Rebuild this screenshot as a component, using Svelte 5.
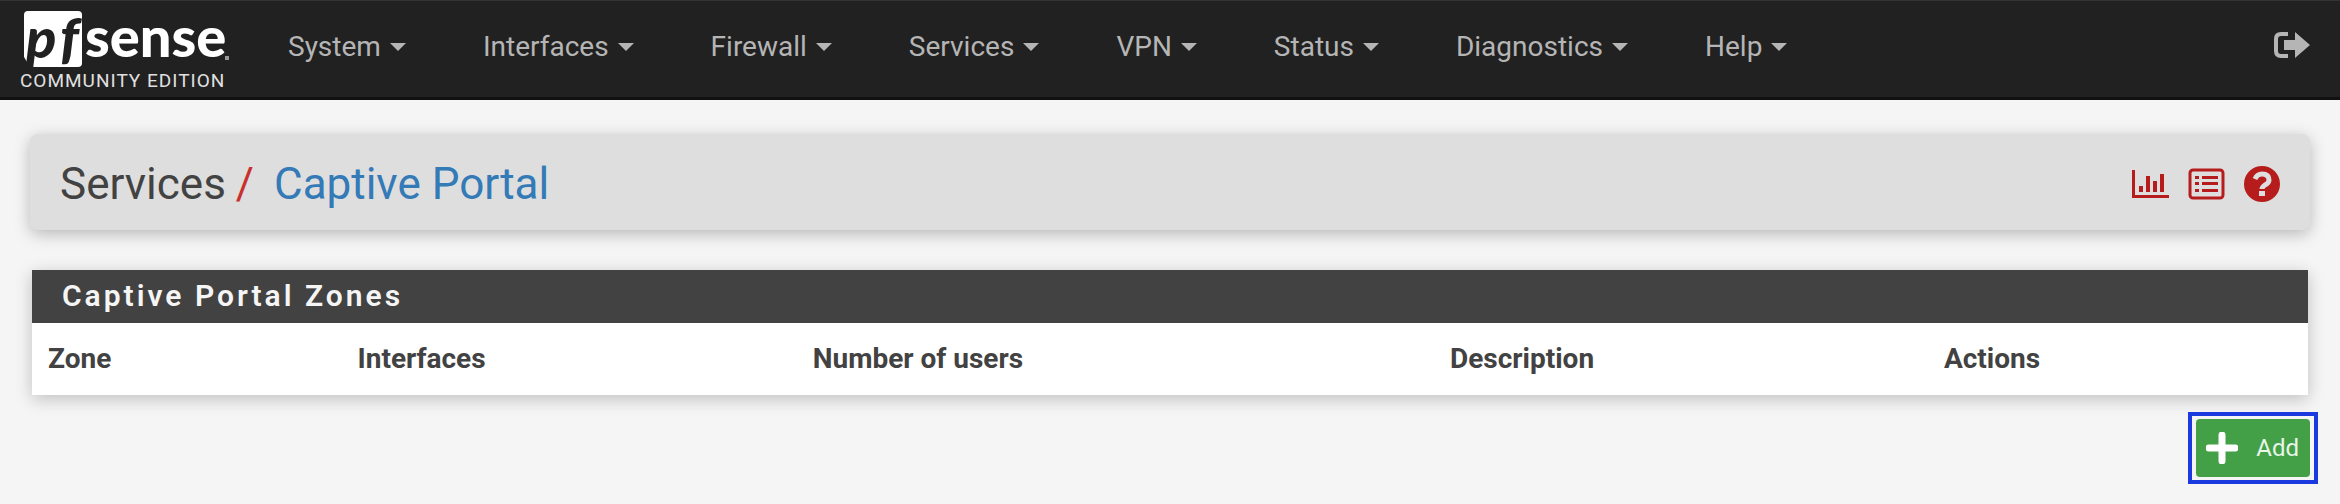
<script>
  const menus = ['System', 'Interfaces', 'Firewall', 'Services', 'VPN', 'Status', 'Diagnostics', 'Help'];
  const columns = ['Zone', 'Interfaces', 'Number of users', 'Description', 'Actions'];
</script>

<header class="navbar">
  <a class="brand" href="#home" aria-label="pfSense Community Edition">
    <svg class="logo" width="210" height="60" viewBox="0 0 210 60">
      <path fill="#fff" d="M8 0h50q4 0 4 4v48q0 4-4 4H10L4 46V4q0-4 4-4z" />
      <text x="6" y="47" class="pf">p</text>
      <text x="40" y="47" class="pf">f</text>
      <text x="65" y="46" class="word">sense</text>
      <rect x="205" y="45" width="4" height="4" fill="#999" />
    </svg>
    <span class="edition">COMMUNITY EDITION</span>
  </a>

  <nav>
    {#each menus as menu}
      <a href="#{menu.toLowerCase()}">{menu} <span class="caret"></span></a>
    {/each}
  </nav>

  <a class="logout" href="#logout" aria-label="Logout">
    <svg width="36" height="26" viewBox="0 0 36 26">
      <path d="M14 2H7Q2 2 2 7v12q0 5 5 5h7" fill="none" stroke="currentColor" stroke-width="4" />
      <path d="M10 8h11V0l15 13-15 13v-8H10z" fill="currentColor" />
    </svg>
  </a>
</header>

<main>
  <div class="page-header">
    <h1>Services<span class="slash">/</span><a href="#captive-portal">Captive Portal</a></h1>
    <div class="context-links">
      <a href="#graph" aria-label="Monitoring">
        <svg width="37" height="28" viewBox="0 0 37 28" fill="currentColor">
          <path d="M0 0h3v25h34v3H0zM7 16h4v6H7zM14 6h4v16h-4zM21 11h4v11h-4zM28 4h4v18h-4z" />
        </svg>
      </a>
      <a href="#log" aria-label="Related log entries">
        <svg width="37" height="32" viewBox="0 0 37 32" fill="currentColor">
          <rect x="2" y="2" width="33" height="28" rx="3" fill="none" stroke="currentColor" stroke-width="3" />
          <path d="M7 8h4v3H7zM14 8h16v3H14zM7 14h4v3H7zM14 14h16v3H14zM7 21h4v3H7zM14 21h16v3H14z" />
        </svg>
      </a>
      <a href="#help" aria-label="Help">
        <svg width="36" height="36" viewBox="0 0 36 36">
          <circle cx="18" cy="18" r="18" fill="currentColor" />
          <path d="M11 13q2-5 7-5 7 0 7 6 0 3-4 5-3 2-3 4" fill="none" stroke="#dedede" stroke-width="5" />
          <rect x="15" y="25" width="6" height="5" fill="#dedede" />
        </svg>
      </a>
    </div>
  </div>

  <section class="panel">
    <h2>Captive Portal Zones</h2>
    <table>
      <thead>
        <tr>
          {#each columns as column}
            <th>{column}</th>
          {/each}
        </tr>
      </thead>
    </table>
  </section>

  <div class="action-buttons">
    <div class="highlight">
      <button type="button">
        <svg width="32" height="32" viewBox="0 0 32 32">
          <path d="M16 3v26M3 16h26" stroke="#fff" stroke-width="7" stroke-linecap="round" />
        </svg>
        Add
      </button>
    </div>
  </div>
</main>

<style>
  :global(body) {
    margin: 0;
    background: #f5f5f5;
    color: #424242;
    font-family: Roboto, "Liberation Sans", sans-serif;
    font-size: 28px;
  }

  a {
    color: inherit;
    text-decoration: none;
  }

  .navbar {
    display: flex;
    align-items: flex-start;
    box-sizing: border-box;
    height: 100px;
    padding: 0 30px 0 20px;
    background: #212121;
    border-top: 1px solid #333;
    border-bottom: 3px solid #111;
    color: #b5b5b5;
  }

  .brand {
    display: flex;
    flex-direction: column;
    width: 212px;
    padding-top: 10px;
  }

  .logo {
    overflow: visible;
  }

  .pf,
  .word {
    fill: #fff;
    font-family: Lato, sans-serif;
    font-size: 56px;
    font-weight: 900;
  }

  .pf {
    fill: #212121;
    font-style: italic;
  }

  .edition {
    color: #e0e0e0;
    font-size: 19px;
    line-height: 20px;
    letter-spacing: 1px;
    white-space: nowrap;
  }

  nav {
    display: flex;
    flex: 1;
    gap: 77px;
    padding: 30px 0 0 56px;
  }

  nav a {
    display: flex;
    align-items: center;
    gap: 9px;
    line-height: 32px;
  }

  .caret {
    border-top: 8px solid;
    border-left: 8px solid transparent;
    border-right: 8px solid transparent;
  }

  .logout {
    padding-top: 31px;
  }

  .logout svg,
  .logo,
  .context-links svg {
    display: block;
  }

  main {
    padding: 34px 30px 20px;
  }

  .page-header {
    display: flex;
    justify-content: space-between;
    align-items: center;
    height: 92px;
    padding: 4px 30px 0;
    background: #dedede;
    border-radius: 8px;
    box-shadow: 0 4px 16px rgba(0, 0, 0, 0.25);
  }

  h1 {
    margin: 0;
    font-size: 44px;
    font-weight: 400;
  }

  .slash {
    margin: 0 20px 0 10px;
    color: #c9302c;
  }

  h1 a {
    color: #337ab7;
  }

  .context-links {
    display: flex;
    align-items: center;
    gap: 19px;
    color: #b71c1c;
  }

  .panel {
    margin: 40px 2px 0;
    background: #fff;
    box-shadow: 0 4px 16px rgba(0, 0, 0, 0.22);
  }

  h2 {
    margin: 0;
    padding: 0 30px 2px;
    background: #424242;
    color: #f5f5f5;
    font-size: 30px;
    font-weight: 600;
    line-height: 51px;
    letter-spacing: 3px;
  }

  table {
    width: 100%;
    table-layout: fixed;
    border-collapse: collapse;
  }

  th {
    box-sizing: border-box;
    height: 72px;
    padding: 0 16px 2px;
    text-align: left;
    font-weight: 700;
  }

  th:nth-child(1) {
    width: 13.6%;
  }

  th:nth-child(2) {
    width: 20%;
  }

  th:nth-child(3) {
    width: 28%;
  }

  th:nth-child(4) {
    width: 21.7%;
  }

  .action-buttons {
    display: flex;
    justify-content: flex-end;
    margin: 17px -8px 0 0;
  }

  .highlight {
    padding: 3px 4px;
    border: 4px solid #1a3ae0;
  }

  button {
    display: flex;
    align-items: center;
    gap: 18px;
    height: 58px;
    padding: 0 11px 0 10px;
    background: #43a047;
    border: 0;
    border-radius: 4px;
    color: #e8f5e9;
    font-family: inherit;
    font-size: 24px;
  }
</style>
